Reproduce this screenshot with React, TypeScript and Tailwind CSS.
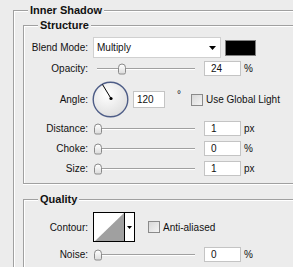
import React from 'react';

// etched group line: gray border + white highlight
const etched = 'border border-[#a0a0a0] shadow-[inset_1px_1px_0_#fff,0_1px_0_#fff]';

function Label({ children }: { children: React.ReactNode }) {
  return <span className="w-[64px] shrink-0 text-right whitespace-nowrap">{children}</span>;
}

function Slider({ pos }: { pos: number }) {
  return (
    <div className="relative flex items-center ml-[5px] w-[104px] h-full shrink-0">
      <div className="ml-[4px] w-[98px] h-[2px] border-t border-b border-t-[#a0a0a0] border-b-white" />
      <div
        className="absolute top-1/2 -translate-y-1/2 w-[8px] h-[11px] border border-[#8a8a8a] rounded-t-[4px] rounded-b-[2px] bg-gradient-to-b from-white to-[#dcdcdc]"
        style={{ left: pos }}
      />
    </div>
  );
}

function NumField({ value, unit }: { value: string; unit: string }) {
  return (
    <>
      <div className="ml-[7px] w-[37px] h-[15px] bg-white border border-[#c4c4c4] pl-[6px] leading-[13px] shrink-0">
        {value}
      </div>
      <span className="ml-[3px]">{unit}</span>
    </>
  );
}

function Checkbox({ label }: { label: string }) {
  return (
    <div className="flex items-center">
      <div className="w-[12px] h-[12px] border border-[#8a8a8a] bg-gradient-to-br from-[#d8d8d8] to-[#f4f4f4] shrink-0" />
      <span className="ml-[3px] whitespace-nowrap">{label}</span>
    </div>
  );
}

function Legend({ children }: { children: React.ReactNode }) {
  return (
    <legend className="ml-[14px] px-[2px] bg-[#ececec] font-bold text-[11px] leading-[14px]">{children}</legend>
  );
}

export default function App() {
  return (
    <div className="w-[293px] h-[267px] overflow-hidden bg-[#ececec] text-[10px] text-[#111] font-['Liberation_Sans',Arial,sans-serif] pt-[3px]">
      <fieldset className={`ml-[13px] w-[320px] h-[300px] ${etched}`}>
        <Legend>Inner Shadow</Legend>

        {/* Structure */}
        <fieldset className={`ml-[9px] mt-[1px] w-[300px] pt-[5px] pb-[7px] ${etched}`}>
          <Legend>Structure</Legend>

          <div className="flex items-center h-[21px]">
            <Label>Blend Mode:</Label>
            <div className="ml-[5px] w-[128px] h-[21px] bg-white border border-[#d0d0d0] flex items-center justify-between pl-[3px] pr-[4px] shrink-0">
              <span>Multiply</span>
              <svg width="7" height="4" viewBox="0 0 7 4">
                <polygon points="0,0 7,0 3.5,4" fill="#000" />
              </svg>
            </div>
            <div className="ml-[4px] w-[31px] h-[16px] bg-black border border-[#808080] shrink-0" />
          </div>

          <div className="flex items-center h-[15px] mt-[3px]">
            <Label>Opacity:</Label>
            <Slider pos={25} />
            <NumField value="24" unit="%" />
          </div>

          <div className="flex items-center h-[37px] mt-[5px]">
            <Label>Angle:</Label>
            <svg className="ml-[4px] shrink-0" width="37" height="37" viewBox="0 0 37 37">
              <defs>
                <radialGradient id="dial" cx="40%" cy="35%" r="70%">
                  <stop offset="0%" stopColor="#ffffff" />
                  <stop offset="100%" stopColor="#dedede" />
                </radialGradient>
              </defs>
              <circle cx="18.5" cy="18.5" r="17.3" fill="url(#dial)" stroke="#4e5d87" strokeWidth="1.4" />
              <line x1="19" y1="17.5" x2="10.5" y2="3.5" stroke="#000" strokeWidth="1" />
              <circle cx="19" cy="17.5" r="1.6" fill="#000" />
            </svg>
            <div className="ml-[4px] w-[32px] h-[17px] bg-white border border-[#c4c4c4] pl-[3px] leading-[15px] shrink-0">
              120
            </div>
            <span className="ml-[12px] self-start mt-[9px] leading-[10px]">°</span>
            <div className="ml-[10px]">
              <Checkbox label="Use Global Light" />
            </div>
          </div>

          <div className="flex items-center h-[15px] mt-[3px]">
            <Label>Distance:</Label>
            <Slider pos={1} />
            <NumField value="1" unit="px" />
          </div>

          <div className="flex items-center h-[15px] mt-[5px]">
            <Label>Choke:</Label>
            <Slider pos={1} />
            <NumField value="0" unit="%" />
          </div>

          <div className="flex items-center h-[15px] mt-[5px]">
            <Label>Size:</Label>
            <Slider pos={1} />
            <NumField value="1" unit="px" />
          </div>
        </fieldset>

        {/* Quality */}
        <fieldset className={`ml-[9px] mt-[8px] w-[300px] h-[120px] pt-[6px] ${etched}`}>
          <Legend>Quality</Legend>

          <div className="flex items-center h-[30px]">
            <Label>Contour:</Label>
            <div className="ml-[5px] w-[42px] h-[30px] border border-black bg-white flex shrink-0">
              <svg width="30" height="28" viewBox="0 0 30 28" className="shrink-0">
                <polygon points="1,28 30,0 30,28" fill="#a0a0a0" />
              </svg>
              <div className="w-[10px] border-l border-black flex items-center justify-center">
                <svg width="5" height="3" viewBox="0 0 5 3">
                  <polygon points="0,0 5,0 2.5,3" fill="#000" />
                </svg>
              </div>
            </div>
            <div className="ml-[13px]">
              <Checkbox label="Anti-aliased" />
            </div>
          </div>

          <div className="flex items-center h-[15px] mt-[5px]">
            <Label>Noise:</Label>
            <Slider pos={1} />
            <NumField value="0" unit="%" />
          </div>
        </fieldset>
      </fieldset>
    </div>
  );
}
